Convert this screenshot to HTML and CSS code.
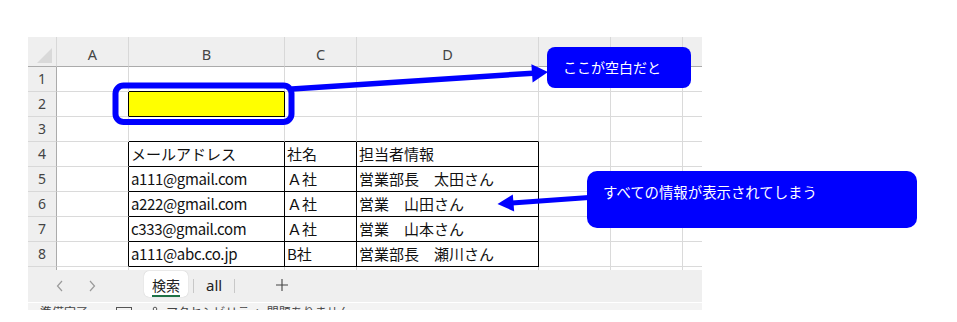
FILE: index.html
```html
<!DOCTYPE html>
<html lang="ja">
<head>
<meta charset="utf-8">
<title>Sheet</title>
<link rel="stylesheet" href="styles.css">
</head>
<body>
<div class="app">
  <div class="sheet">
    <div class="grid">
      <div class="corner"><span class="tri"></span></div>
      <div class="ch">A</div><div class="ch">B</div><div class="ch">C</div><div class="ch">D</div><div class="ch">E</div><div class="ch">F</div><div class="ch">G</div>

      <div class="rh">1</div><div class="c"></div><div class="c bb"></div><div class="c"></div><div class="c"></div><div class="c"></div><div class="c"></div><div class="c"></div>
      <div class="rh">2</div><div class="c br"></div><div class="c y bb br"></div><div class="c"></div><div class="c"></div><div class="c"></div><div class="c"></div><div class="c"></div>
      <div class="rh">3</div><div class="c"></div><div class="c bb"></div><div class="c bb"></div><div class="c bb"></div><div class="c"></div><div class="c"></div><div class="c"></div>
      <div class="rh">4</div><div class="c br"></div><div class="c t bb br">メールアドレス</div><div class="c t bb br">社名</div><div class="c t bb br">担当者情報</div><div class="c"></div><div class="c"></div><div class="c"></div>
      <div class="rh">5</div><div class="c br"></div><div class="c t en bb br">a111@gmail.com</div><div class="c t bb br">Ａ社</div><div class="c t bb br">営業部長　太田さん</div><div class="c"></div><div class="c"></div><div class="c"></div>
      <div class="rh">6</div><div class="c br"></div><div class="c t en bb br">a222@gmail.com</div><div class="c t bb br">Ａ社</div><div class="c t bb br">営業　山田さん</div><div class="c"></div><div class="c"></div><div class="c"></div>
      <div class="rh">7</div><div class="c br"></div><div class="c t en bb br">c333@gmail.com</div><div class="c t bb br">Ａ社</div><div class="c t bb br">営業　山本さん</div><div class="c"></div><div class="c"></div><div class="c"></div>
      <div class="rh">8</div><div class="c br"></div><div class="c t en bb br">a111@abc.co.jp</div><div class="c t bb br">B社</div><div class="c t bb br">営業部長　瀬川さん</div><div class="c"></div><div class="c"></div><div class="c"></div>
      <div class="rh">9</div><div class="c"></div><div class="c"></div><div class="c"></div><div class="c"></div><div class="c"></div><div class="c"></div><div class="c"></div>
    </div>
  </div>

  <div class="tabbar">
    <div class="navs">
      <svg class="nav" width="8" height="12" viewBox="0 0 8 12"><polyline points="6,1 1.5,6 6,11" fill="none" stroke="#9a9a9a" stroke-width="1.2"/></svg>
      <svg class="nav" width="8" height="12" viewBox="0 0 8 12"><polyline points="2,1 6.5,6 2,11" fill="none" stroke="#9a9a9a" stroke-width="1.2"/></svg>
    </div>
    <div class="tab active"><span class="tab-label">検索</span></div>
    <div class="sep sep1"></div>
    <div class="tab other"><span class="tab-label plain">all</span></div>
    <div class="sep"></div>
    <svg class="plus" width="14" height="14" viewBox="0 0 14 14"><path d="M7 1v12M1 7h12" stroke="#444" stroke-width="1.1" fill="none"/></svg>
  </div>

  <div class="status">
    <span class="st-text">準備完了</span>
    <span class="st-box"></span>
    <svg class="st-icon" width="14" height="14" viewBox="0 0 14 14"><circle cx="7" cy="3" r="1.8" fill="none" stroke="#555" stroke-width="1"/><path d="M2 6h10M7 6v7M4 13l3-4 3 4" fill="none" stroke="#555" stroke-width="1"/></svg>
    <span class="st-text">アクセシビリティ: 問題ありません</span>
  </div>
</div>

<svg class="overlay" width="957" height="322" viewBox="0 0 957 322">
  <rect x="115.5" y="85.5" width="176" height="36.5" rx="8" ry="8" fill="none" stroke="#0000ff" stroke-width="6"/>
  <line x1="292" y1="89" x2="533" y2="73.2" stroke="#0000ff" stroke-width="5.5"/>
  <polygon points="548,72 531.4,64.2 532.6,82.4" fill="#0000ff"/>
  <line x1="589" y1="197.5" x2="512" y2="203" stroke="#0000ff" stroke-width="4.8"/>
  <polygon points="497.5,204 512.8,194.4 514.2,211.4" fill="#0000ff"/>
</svg>

<div class="callout c1">ここが空白だと</div>
<div class="callout c2">すべての情報が表示されてしまう</div>
</body>
</html>
```

FILE: styles.css
```css
html, body {
  margin: 0;
  padding: 0;
  background: #ffffff;
}

body {
  width: 957px;
  height: 322px;
  overflow: hidden;
  font-family: "Noto Sans CJK JP", "Noto Sans", sans-serif;
}

.app {
  margin: 37px 0 0 28px;
  width: 674px;
}

.sheet {
  height: 233px;
  width: 674px;
  overflow: hidden;
}

.grid {
  display: grid;
  grid-template-columns: 29px 72px 156px 72px 182px 72px 72px 72px;
  grid-template-rows: 30px repeat(9, 25px);
  width: 727px;
}

.grid > div {
  box-sizing: border-box;
}

.corner {
  background: #efefef;
  border-right: 1px solid #d8d8d8;
  border-bottom: 1px solid #ababab;
  display: flex;
  justify-content: flex-end;
  align-items: flex-end;
  padding: 0 4px 3px 0;
}

.tri {
  display: block;
  width: 15px;
  height: 15px;
  background: #d9d9d9;
  clip-path: polygon(100% 0, 100% 100%, 0 100%);
}

.ch {
  background: #efefef;
  border-right: 1px solid #d8d8d8;
  border-bottom: 1px solid #ababab;
  font-family: "Noto Sans", "Open Sans", sans-serif;
  font-size: 14.5px;
  color: #444444;
  text-align: center;
  line-height: 30px;
  padding-top: 2px;
}

.rh {
  background: #efefef;
  border-right: 1px solid #ababab;
  border-bottom: 1px solid #d8d8d8;
  font-family: "Noto Sans", "Open Sans", sans-serif;
  font-size: 14px;
  color: #444444;
  text-align: center;
  line-height: 24px;
}

.c {
  border-right: 1px solid #dadada;
  border-bottom: 1px solid #dadada;
  background: #ffffff;
}

.c.bb { border-bottom-color: #000000; }
.c.br { border-right-color: #000000; }
.c.y { background: #ffff00; }

.t {
  font-family: "Noto Sans CJK JP", sans-serif;
  font-size: 15px;
  line-height: 24px;
  color: #111111;
  padding-left: 2px;
  white-space: nowrap;
  overflow: hidden;
}

.t.en {
  letter-spacing: -0.35px;
}

.tabbar {
  height: 32px;
  background: #efefef;
  display: flex;
  align-items: flex-start;
  border-bottom: 1px solid #ffffff;
}

.navs {
  display: flex;
  gap: 24px;
  padding: 10px 0 0 28px;
  width: 88px;
  box-sizing: border-box;
}

.nav { display: block; }

.tab {
  height: 26px;
  margin-top: 1px;
  display: flex;
  justify-content: center;
  box-sizing: border-box;
}

.tab.active {
  width: 44px;
  margin-left: 28px;
  background: #ffffff;
  border-radius: 5px;
  box-shadow: 0 0 1px rgba(0, 0, 0, 0.25);
}

.tab.other {
  padding: 0 12px 0 12px;
}

.tab-label {
  font-family: "Noto Sans CJK JP", sans-serif;
  font-size: 14px;
  line-height: 20px;
  color: #222222;
  margin-top: 4px;
  height: 20px;
  border-bottom: 2px solid #1e7145;
}

.tab-label.plain {
  font-family: "Noto Sans", sans-serif;
  font-size: 15px;
  border-bottom: none;
  color: #222222;
  margin-top: 4px;
}

.sep {
  width: 1px;
  height: 14px;
  margin-top: 9px;
  background: #c8c8c8;
}

.sep1 {
  margin-left: 5px;
}

.plus {
  display: block;
  margin: 8px 0 0 40px;
}

.status {
  height: 7px;
  background: #f3f3f3;
  overflow: hidden;
  display: flex;
  align-items: flex-start;
  gap: 16px;
  padding-left: 12px;
}

.st-text {
  font-family: "Noto Sans CJK JP", sans-serif;
  font-size: 12px;
  line-height: 16px;
  color: #444444;
  margin-top: 1px;
  white-space: nowrap;
}

.st-box {
  width: 14px;
  height: 12px;
  border: 1px solid #555555;
  margin-top: 4px;
  margin-left: 12px;
  flex: none;
}

.st-icon {
  display: block;
  margin-top: 3px;
  flex: none;
  margin-right: -12px;
}

.overlay {
  position: absolute;
  top: 0;
  left: 0;
  pointer-events: none;
}

.callout {
  position: absolute;
  background: #0000ff;
  color: #ffffff;
  font-family: "Noto Sans CJK JP", sans-serif;
  font-size: 14px;
  box-sizing: border-box;
  white-space: nowrap;
}

.c1 {
  left: 547px;
  top: 47px;
  width: 144px;
  height: 41px;
  border-radius: 8px;
  padding-left: 16px;
  line-height: 41px;
}

.c2 {
  left: 587px;
  top: 171px;
  width: 330px;
  height: 57px;
  border-radius: 10px;
  padding: 11px 0 0 16px;
  line-height: 20px;
  font-size: 14.4px;
}
```
